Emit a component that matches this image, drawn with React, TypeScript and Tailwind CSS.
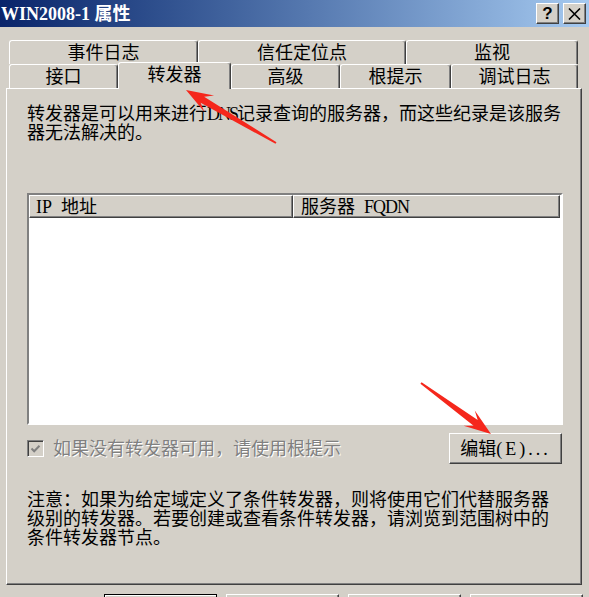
const font = "font-['Liberation_Serif','Noto_Sans_CJK_SC',serif]";

const raised =
  "border border-t-white border-l-white border-r-[#404040] border-b-[#404040] shadow-[inset_-1px_-1px_0_#808080]";

const tab =
  "h-[24px] flex items-center justify-center text-[18px] leading-none border-t border-l border-r border-t-white border-l-white border-r-[#404040] shadow-[inset_-1px_0_0_#808080] rounded-t-[3px]";

function arrowPoints(tx: number, ty: number, px: number, py: number) {
  const dx = px - tx;
  const dy = py - ty;
  const len = Math.hypot(dx, dy);
  const ux = dx / len;
  const uy = dy / len;
  const nx = -uy;
  const ny = ux;
  const at = (back: number, side: number) =>
    `${px - ux * back + nx * side},${py - uy * back + ny * side}`;
  return [
    `${tx + nx * 1},${ty + ny * 1}`,
    at(19, 3.5),
    at(27, 9.5),
    `${px},${py}`,
    at(27, -9.5),
    at(19, -3.5),
    `${tx - nx * 1},${ty - ny * 1}`,
  ].join(" ");
}

const App = () => {
  return (
    <div className={`relative w-[589px] h-[597px] overflow-hidden bg-[#d4d0c8] text-black ${font}`}>
      {/* title bar */}
      <div className="h-[27px] flex items-center justify-between pr-[3px] bg-linear-to-r from-[#0a246a] to-[#a6caf0]">
        <p className="pl-[1px] text-white font-bold text-[18px] leading-none">WIN2008-1 属性</p>
        <div className="flex gap-[4px]">
          <div className={`w-[23px] h-[21px] bg-[#d4d0c8] flex items-center justify-center ${raised}`}>
            <span className="font-['Liberation_Sans',sans-serif] font-bold text-[17px] leading-none">?</span>
          </div>
          <div className={`w-[23px] h-[21px] bg-[#d4d0c8] flex items-center justify-center ${raised}`}>
            <svg width="13" height="12" viewBox="0 0 13 12">
              <path d="M1 0.5 L12 11.5 M12 0.5 L1 11.5" stroke="#000" strokeWidth="1.6" />
            </svg>
          </div>
        </div>
      </div>

      {/* tabs */}
      <div className="mt-[13px] ml-[9px] flex">
        <div className={`${tab} w-[189px]`}>事件日志</div>
        <div className={`${tab} w-[208px]`}>信任定位点</div>
        <div className={`${tab} w-[172px]`}>监视</div>
      </div>
      <div className="ml-[9px] flex items-end h-[24px]">
        <div className={`${tab} w-[109px]`}>接口</div>
        <div className={`${tab} w-[113px] h-[27px] -mb-px relative z-10 bg-[#d4d0c8] pb-[3px]`}>转发器</div>
        <div className={`${tab} w-[109px]`}>高级</div>
        <div className={`${tab} w-[111px]`}>根提示</div>
        <div className={`${tab} w-[127px]`}>调试日志</div>
      </div>

      {/* panel */}
      <div className={`ml-[6px] w-[576px] h-[497px] pl-[20px] pt-[16px] ${raised}`}>
        <p className="text-[18px] leading-[19px] whitespace-nowrap">
          转发器是可以用来进行<span className="tracking-[-2px]">DNS</span>记录查询的服务器，而这些纪录是该服务
          <br />
          器无法解决的。
        </p>

        <div className="mt-[50px] w-[536px] h-[232px] border-2 border-t-[#808080] border-l-[#808080] border-r-white border-b-white bg-white">
          <div className="flex h-[23px] text-[18px] leading-none">
            <div className={`w-[264px] bg-[#d4d0c8] flex items-center pl-[6px] ${raised}`}>IP{"\u2002"}地址</div>
            <div className={`w-[267px] bg-[#d4d0c8] flex items-center pl-[7px] ${raised}`}>
              服务器{"\u2002"}<span className="tracking-[-1px]">FQDN</span>
            </div>
          </div>
        </div>

        <div className="mt-[8px] w-[536px] h-[31px] flex items-center justify-between">
          <div className="flex items-center gap-[9px]">
            <div className="w-[17px] h-[17px] border border-t-[#808080] border-l-[#808080] border-r-white border-b-white shadow-[inset_1px_1px_0_#404040] flex items-center justify-center">
              <svg width="11" height="10" viewBox="0 0 11 10">
                <path d="M1.5 4.5 L4.2 7.3 L9.5 1.8" stroke="#808080" strokeWidth="2" fill="none" />
              </svg>
            </div>
            <span className="text-[18px] leading-none text-[#808080] [text-shadow:1px_1px_0_#ffffff]">
              如果没有转发器可用，请使用根提示
            </span>
          </div>
          <button className={`w-[113px] h-[31px] mr-px bg-[#d4d0c8] text-[18px] leading-none ${raised}`}>
            编辑<span className="tracking-[3px]">(E)...</span>
          </button>
        </div>

        <p className="mt-[27px] text-[18px] leading-[19px] whitespace-nowrap">
          注意：如果为给定域定义了条件转发器，则将使用它们代替服务器
          <br />
          级别的转发器。若要创建或查看条件转发器，请浏览到范围树中的
          <br />
          条件转发器节点。
        </p>
      </div>

      {/* dialog buttons, mostly cut off */}
      <div className="mt-[9px] ml-[104px] flex gap-[9px]">
        <div className="w-[113px] h-[31px] border border-black bg-[#d4d0c8] shadow-[inset_1px_1px_0_#fff]" />
        <div className={`w-[113px] h-[31px] bg-[#d4d0c8] ${raised}`} />
        <div className={`w-[113px] h-[31px] bg-[#d4d0c8] ${raised}`} />
        <div className={`w-[113px] h-[31px] bg-[#d4d0c8] ${raised}`} />
      </div>

      {/* annotation arrows */}
      <svg className="absolute inset-0 pointer-events-none" width="589" height="597">
        <polygon points={arrowPoints(276, 143, 186, 90)} fill="#f5271c" />
        <polygon points={arrowPoints(421, 383, 491, 434)} fill="#f5271c" />
      </svg>
    </div>
  );
};

export default App;
